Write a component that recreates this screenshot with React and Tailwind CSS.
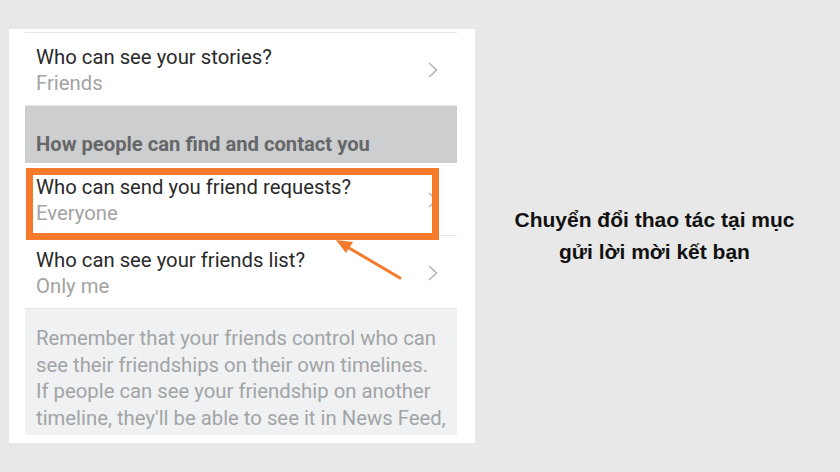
import React from "react";

const Chevron = () => (
  <svg width="12" height="18" viewBox="0 0 12 18" className="shrink-0">
    <path d="M2 2 L9.5 9 L2 16" fill="none" stroke="#b5b5b5" strokeWidth="1.6" />
  </svg>
);

const Row = ({ title, sub, chevron = true }) => (
  <div className="flex h-[73px] items-start justify-between border-b border-[#e6e6e6] pl-[11px] pr-[18px]">
    <div className="pt-[11px]">
      <div className="text-[20.3px] leading-[26px] text-[#2a2a2a]">{title}</div>
      <div className="text-[20.3px] leading-[26px] text-[#a3a3a3]">{sub}</div>
    </div>
    {chevron && (
      <div className="flex h-full items-center pt-[1px]">
        <Chevron />
      </div>
    )}
  </div>
);

export default function App() {
  return (
    <div
      className="flex h-[472px] w-[840px] bg-[#e8e8e8]"
      style={{ fontFamily: "Roboto, 'Noto Sans', sans-serif" }}
    >
      <div className="pl-[9px] pt-[29px]">
        <div className="relative h-[414px] w-[466px] bg-white pl-[16px] pr-[18px] pt-[3px]">
          <div className="border-t border-[#e6e6e6]">
            <Row title="Who can see your stories?" sub="Friends" />
            <div className="h-[57px] bg-[#cdcecf] pl-[11px] pt-[25px] text-[20.2px] font-bold leading-[26px] text-[#666768]">
              How people can find and contact you
            </div>
            <div className="relative">
              <Row title="Who can send you friend requests?" sub="Everyone" />
              <div className="absolute left-[1px] top-[5px] h-[72px] w-[413px] border-[7px] border-[#f57a2c]" />
            </div>
            <Row title="Who can see your friends list?" sub="Only me" />
            <div className="h-[126px] bg-[#eff1f2] pl-[11px] pt-[16px] text-[20.3px] leading-[26.5px] text-[#a2a4a6]">
              <div>Remember that your friends control who can</div>
              <div>see their friendships on their own timelines.</div>
              <div>If people can see your friendship on another</div>
              <div>timeline, they'll be able to see it in News Feed,</div>
            </div>
          </div>
          <svg
            className="absolute left-0 top-0"
            width="466"
            height="414"
            viewBox="0 0 466 414"
          >
            <line x1="335" y1="216" x2="391" y2="249" stroke="#f57a2c" strokeWidth="3" strokeLinecap="round" />
            <polygon points="327,211 344,213 337,224" fill="#f57a2c" />
          </svg>
        </div>
      </div>
      <div className="flex flex-1 items-center justify-center pr-[6px]">
        <div
          className="text-center text-[21px] font-bold leading-[32px] text-[#111]"
          style={{ fontFamily: "'Liberation Sans', Arial, sans-serif" }}
        >
          <div>Chuyển đổi thao tác tại mục</div>
          <div>gửi lời mời kết bạn</div>
        </div>
      </div>
    </div>
  );
}
